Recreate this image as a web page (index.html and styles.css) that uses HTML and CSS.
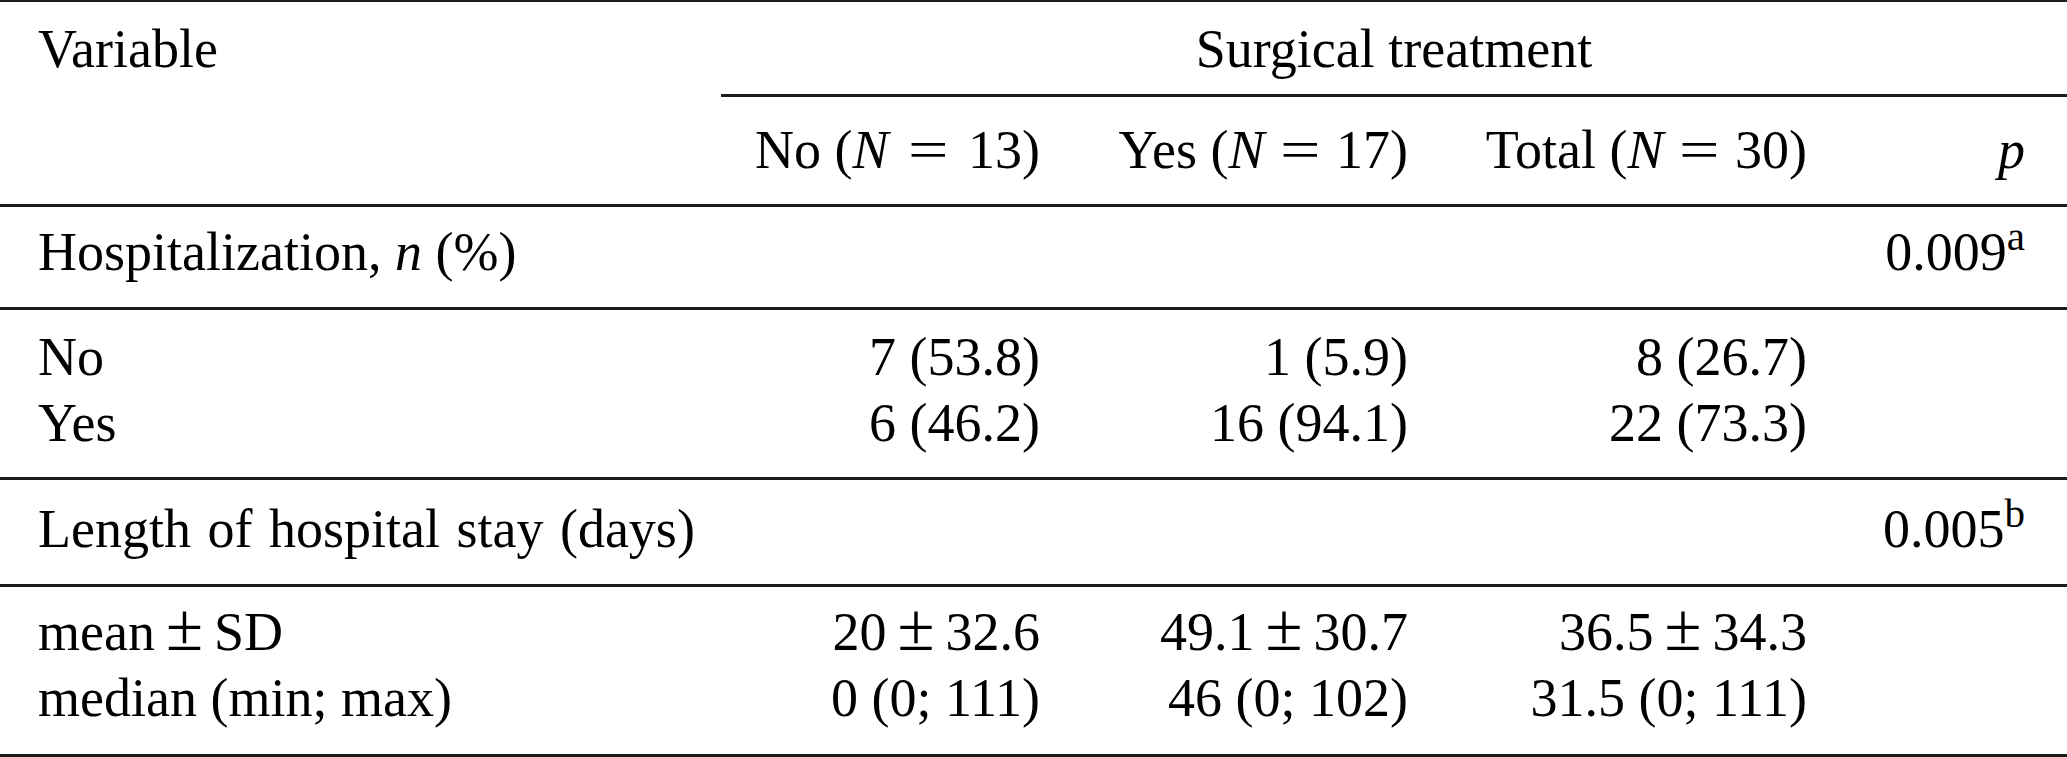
FILE: index.html
```html
<!DOCTYPE html>
<html lang="en">
<head>
<meta charset="utf-8">
<title>Surgical treatment table</title>
<link rel="stylesheet" href="styles.css">
</head>
<body>
<table class="tbl">
  <colgroup>
    <col class="c-var">
    <col class="c-no">
    <col class="c-yes">
    <col class="c-tot">
    <col class="c-p">
  </colgroup>
  <thead>
    <tr class="r-head1">
      <th class="lbl">Variable</th>
      <th class="span" colspan="4">Surgical treatment</th>
    </tr>
    <tr class="r-head2">
      <th class="lbl"></th>
      <th class="num">No (<i>N</i> <span class="rel rel-wide">=</span> 13)</th>
      <th class="num">Yes (<i>N</i> <span class="rel">=</span> 17)</th>
      <th class="num">Total (<i>N</i> <span class="rel">=</span> 30)</th>
      <th class="num pcol"><i>p</i></th>
    </tr>
  </thead>
  <tbody>
    <tr class="r-group r-group-first">
      <td class="lbl">Hospitalization, <i>n</i> (%)</td>
      <td></td><td></td><td></td>
      <td class="num pcol">0.009<sup class="note">a</sup></td>
    </tr>
    <tr class="r-first">
      <td class="lbl">No</td>
      <td class="num">7 (53.8)</td>
      <td class="num">1 (5.9)</td>
      <td class="num">8 (26.7)</td>
      <td class="num pcol"></td>
    </tr>
    <tr class="r-last">
      <td class="lbl">Yes</td>
      <td class="num">6 (46.2)</td>
      <td class="num">16 (94.1)</td>
      <td class="num">22 (73.3)</td>
      <td class="num pcol"></td>
    </tr>
    <tr class="r-group r-group-second">
      <td class="lbl lbl-loose">Length of hospital stay (days)</td>
      <td></td><td></td><td></td>
      <td class="num pcol">0.005<sup class="note">b</sup></td>
    </tr>
    <tr class="r-first r-first-b">
      <td class="lbl">mean<span class="pm">±</span>SD</td>
      <td class="num">20<span class="pm">±</span>32.6</td>
      <td class="num">49.1<span class="pm">±</span>30.7</td>
      <td class="num">36.5<span class="pm">±</span>34.3</td>
      <td class="num pcol"></td>
    </tr>
    <tr class="r-last r-end">
      <td class="lbl">median (min; max)</td>
      <td class="num">0 (0; 111)</td>
      <td class="num">46 (0; 102)</td>
      <td class="num">31.5 (0; 111)</td>
      <td class="num pcol"></td>
    </tr>
  </tbody>
</table>
</body>
</html>
```

FILE: styles.css
```css
html, body {
  margin: 0;
  padding: 0;
  background: #ffffff;
}

body {
  font-family: "Liberation Serif", "Times New Roman", serif;
  font-size: 54px;
  line-height: 66px;
  color: #000000;
}

.tbl {
  width: 2067px;
  table-layout: fixed;
  border-collapse: separate;
  border-spacing: 0;
  border-top: 2px solid #1c1c1c;
}

.c-var { width: 721px; }
.c-no  { width: 319px; }
.c-yes { width: 368px; }
.c-tot { width: 399px; }
.c-p   { width: 260px; }

.tbl th,
.tbl td {
  padding: 0;
  font-weight: normal;
  vertical-align: top;
  white-space: nowrap;
}

.tbl i {
  font-style: italic;
}

.lbl {
  text-align: left;
  padding-left: 38px !important;
}

.lbl-loose {
  word-spacing: 3px;
}

.num {
  text-align: right;
}

.pcol {
  padding-right: 42px !important;
}

.span {
  text-align: center;
}

/* header row 1 */
.r-head1 th {
  padding-top: 14px;
}
.r-head1 .span {
  padding-bottom: 12px;
  border-bottom: 3px solid #1c1c1c;
}

/* header row 2 */
.r-head2 th {
  padding-top: 20px;
  padding-bottom: 21px;
  border-bottom: 3px solid #1c1c1c;
}

/* group rows */
.r-group td {
  border-bottom: 3px solid #1c1c1c;
}
.r-group-first td {
  padding-top: 12px;
  padding-bottom: 22px;
}
.r-group-second td {
  padding-top: 16px;
  padding-bottom: 22px;
}

/* data rows */
.r-first td {
  padding-top: 14px;
}
.r-first-b td {
  padding-top: 12px;
}
.r-last td {
  padding-bottom: 21px;
  border-bottom: 3px solid #1c1c1c;
}
.r-end td {
  padding-bottom: 23px;
}

/* math-like operators */
.rel {
  display: inline-block;
  transform: scaleX(1.33);
  margin: 0 7px;
}

.rel-wide {
  margin: 0 11px;
}

.pm {
  font-size: 1.25em;
  line-height: 0;
  margin: 0 11px;
}

.note {
  font-size: 0.76em;
  line-height: 0;
  vertical-align: 20px;
}
```
